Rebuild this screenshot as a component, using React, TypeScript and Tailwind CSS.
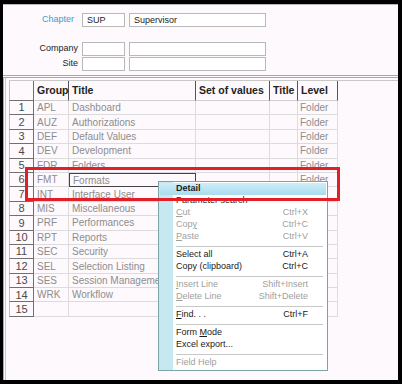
const rows: [string, string][] = [
  ["APL", "Dashboard"],
  ["AUZ", "Authorizations"],
  ["DEF", "Default Values"],
  ["DEV", "Development"],
  ["FDR", "Folders"],
  ["FMT", "Formats"],
  ["INT", "Interface User"],
  ["MIS", "Miscellaneous"],
  ["PRF", "Performances"],
  ["RPT", "Reports"],
  ["SEC", "Security"],
  ["SEL", "Selection Listing"],
  ["SES", "Session Management"],
  ["WRK", "Workflow"],
  ["", ""],
]

type Item = {
  label: React.ReactNode
  key?: string
  off?: boolean
  sel?: boolean
  sep?: boolean
}

const u = (s: string) => <span className="underline">{s}</span>

const menu: Item[] = [
  { label: "Detail", sel: true },
  { label: "Parameter search" },
  { label: <>{u("C")}ut</>, key: "Ctrl+X", off: true },
  { label: <>Cop{u("y")}</>, key: "Ctrl+C", off: true },
  { label: <>{u("P")}aste</>, key: "Ctrl+V", off: true, sep: true },
  { label: "Select all", key: "Ctrl+A" },
  { label: "Copy (clipboard)", key: "Ctrl+C", sep: true },
  { label: <>{u("I")}nsert Line</>, key: "Shift+Insert", off: true },
  { label: <>{u("D")}elete Line</>, key: "Shift+Delete", off: true, sep: true },
  { label: <>{u("F")}ind. . .</>, key: "Ctrl+F", sep: true },
  { label: <>Form {u("M")}ode</> },
  { label: "Excel export...", sep: true },
  { label: "Field Help", off: true },
]

function Field({ w, value }: { w: string; value?: string }) {
  return (
    <div className={`${w} h-[14px] border border-[#b9b9b9] bg-white px-1 text-[9px] leading-[12px] text-[#222]`}>
      {value}
    </div>
  )
}

export default function App() {
  return (
    <div className="relative h-[384px] w-[402px] bg-black pb-[4px] pl-[3px] pr-[4px] pt-[4px] font-['Liberation_Sans',Arial,sans-serif]">
      <div className="flex h-full flex-col bg-[#fdf9fd]">
        {/* en-tête */}
        <div className="h-[71px] border-t border-[#b8b8b8] pt-[8px]">
          <div className="flex items-center gap-[4px]">
            <span className="w-[75px] pr-[4px] text-right text-[9px] text-[#3a9ccc]">Chapter</span>
            <Field w="w-[43px]" value="SUP" />
            <Field w="w-[137px]" value="Supervisor" />
          </div>
          <div className="mt-[15px] flex items-center gap-[4px]">
            <span className="w-[75px] text-right text-[9px] text-[#222]">Company</span>
            <Field w="w-[43px]" />
            <Field w="w-[137px]" />
          </div>
          <div className="mt-[1px] flex items-center gap-[4px]">
            <span className="w-[75px] text-right text-[9px] text-[#222]">Site</span>
            <Field w="w-[43px]" />
            <Field w="w-[137px]" />
          </div>
        </div>
        <div className="h-[3px] border-y border-[#a8a8a8]" />

        {/* grille */}
        <div className="flex-1 border-l border-[#a8a8a8] pl-[1px]">
          <div className="h-full border-l border-[#c8c8c8] pl-[3px] pt-[2px]">
            <div className="grid grid-cols-[25px_35px_127px_74px_28px_40px] border-t border-[#c8c8c8] text-[10px]">
              <div className="h-[20px] border-b border-l border-r border-[#707070] border-l-[#c0c0c0]" />
              {["Group", "Title", "Set of values", "Title", "Level"].map((h, i) => (
                <div
                  key={i}
                  className="flex h-[20px] items-center border-b border-r border-b-[#d0d0d0] border-r-[#555] pl-[3px] text-[10.5px] font-bold text-[#222]"
                >
                  {h}
                </div>
              ))}
              {rows.map(([g, t], i) => (
                <div key={i} className="contents">
                  <div className="flex h-[14.4px] items-center justify-center border-b border-l border-r border-[#707070] border-l-[#c0c0c0] text-[11px] text-[#4a4a4a]">
                    {i + 1}
                  </div>
                  <div className="flex h-[14.4px] items-center border-b border-r border-[#dcdcdc] pl-[3px] text-[#8d8d8d]">
                    {g}
                  </div>
                  <div
                    className={`flex h-[14.4px] items-center overflow-hidden whitespace-nowrap border-b border-r pl-[3px] text-[#8d8d8d] ${
                      i === 5 ? "border border-[#444] border-r-[#444]" : "border-[#dcdcdc]"
                    }`}
                  >
                    {t}
                  </div>
                  <div className="h-[14.4px] border-b border-r border-[#dcdcdc]" />
                  <div className="h-[14.4px] border-b border-r border-[#dcdcdc]" />
                  <div className="flex h-[14.4px] items-center border-b border-r border-[#dcdcdc] pl-[2px] text-[#8d8d8d]">
                    {i < 6 ? "Folder" : ""}
                  </div>
                </div>
              ))}
            </div>
          </div>
        </div>
      </div>

      {/* menu contextuel */}
      <div className="absolute left-[158px] top-[181px] w-[170px] border border-[#7aa4a6] bg-white py-[1px] text-[9px]">
        <div className="absolute bottom-0 left-0 top-0 w-[14px] bg-[#c6e8f1]" />
        {menu.map((m, i) => (
          <div key={i} className="relative">
            <div
              className={`mx-[1px] flex h-[12px] items-center pl-[16px] pr-[18px] ${
                m.sel ? "bg-gradient-to-b from-[#cdeef8] to-[#a9dcee] font-bold" : ""
              } ${m.off ? "text-[#a0a0a0]" : "text-[#1a1a1a]"}`}
            >
              <span className="flex-1">{m.label}</span>
              {m.key && <span>{m.key}</span>}
            </div>
            {m.sep && (
              <div className="flex h-[6px] items-center pl-[17px] pr-[4px]">
                <div className="h-px w-full bg-[#c8c8c8]" />
              </div>
            )}
          </div>
        ))}
      </div>

      {/* cadre rouge */}
      <div className="absolute left-[25px] top-[167px] h-[34px] w-[315px] border-[3px] border-[#e41e26]" />
    </div>
  )
}
